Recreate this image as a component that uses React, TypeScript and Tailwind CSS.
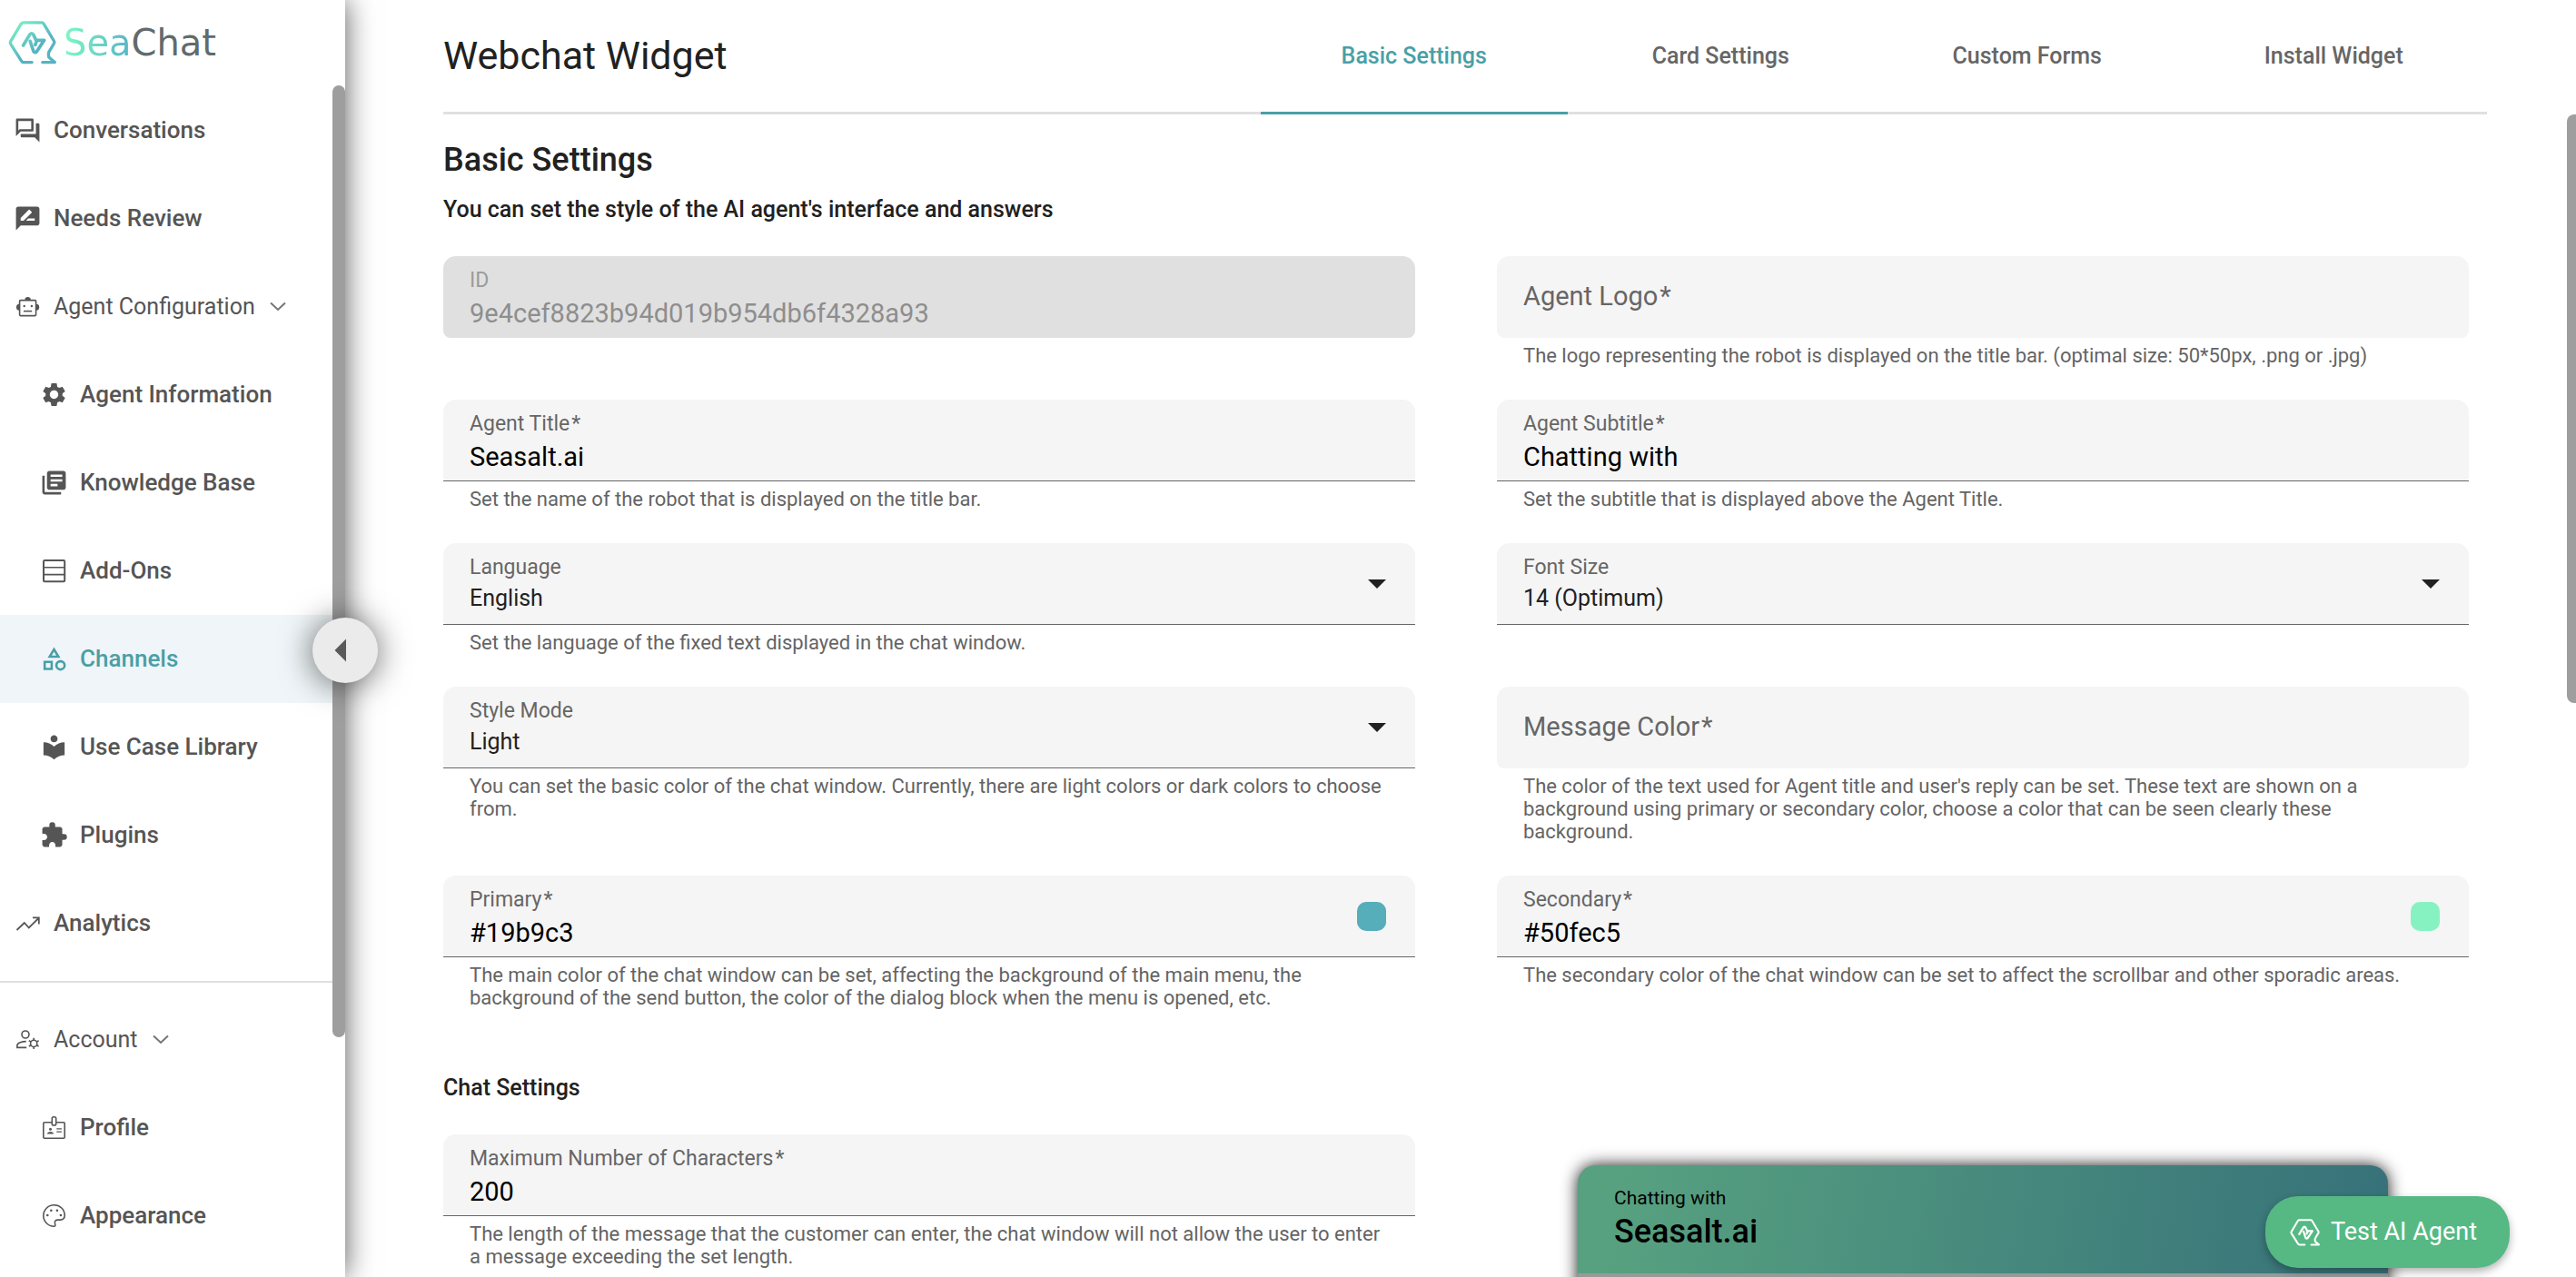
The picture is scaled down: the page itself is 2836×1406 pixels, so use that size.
import { useId } from "react";
import type { ComponentType, ReactNode } from "react";
import {
  MdArrowLeft,
  MdExtension,
  MdLibraryBooks,
  MdLocalLibrary,
  MdOutlineCategory,
  MdOutlineQuestionAnswer,
  MdRateReview,
  MdSettings,
} from "react-icons/md";

type IconProps = { className?: string };

function LineIcon({ className, children }: IconProps & { children: ReactNode }) {
  return (
    <svg viewBox="-3 -3 31 31" className={className} fill="none" stroke="currentColor" strokeWidth="1.6" aria-hidden="true">
      {children}
    </svg>
  );
}

function RobotIcon({ className }: IconProps) {
  return (
    <LineIcon className={className}>
      <rect x="3.6" y="5.6" width="18" height="17" rx="1" />
      <path d="M9.4 5.2a3.2 3.2 0 0 1 6.4 0zM3.2 9.8v7A3.3 3.3 0 0 1 0 13.3a3.3 3.3 0 0 1 3.2-3.5zM22 9.8v7a3.3 3.3 0 0 0 3.2-3.5A3.3 3.3 0 0 0 22 9.8z" fill="currentColor" stroke="none" />
      <circle cx="8.7" cy="12" r="1.2" fill="currentColor" stroke="none" />
      <circle cx="16.9" cy="12" r="1.2" fill="currentColor" stroke="none" />
      <path d="M8 17.6h9.2" />
    </LineIcon>
  );
}

function RowsIcon({ className }: IconProps) {
  return (
    <LineIcon className={className}>
      <rect x="1" y="1" width="23.2" height="23.2" rx="1.2" strokeWidth="2" />
      <path d="M1 8.8h23M1 16.6h23" />
    </LineIcon>
  );
}

function TrendIcon({ className }: IconProps) {
  return (
    <LineIcon className={className}>
      <path d="M.5 20 8.8 12l5 5.5L24.4 7" strokeWidth="1.8" />
      <path d="M18 6.4h6.8v7" strokeWidth="1.8" />
    </LineIcon>
  );
}

function AccountIcon({ className }: IconProps) {
  return (
    <LineIcon className={className}>
      <circle cx="10" cy="7" r="4" />
      <path d="M10.8 14.6C6.5 14.6.9 16.2.9 19v2.4h10.3" />
      <circle cx="19.2" cy="16.9" r="3.6" />
      <path d="M19.2 13.3v-2.6M19.2 20.5v2.6M16.1 15.1l-2.3-1.3M22.3 18.7l2.3 1.3M16.1 18.7l-2.3 1.3M22.3 15.1l2.3-1.3" />
    </LineIcon>
  );
}

function BadgeIcon({ className }: IconProps) {
  return (
    <LineIcon className={className}>
      <rect x=".8" y="6.8" width="23.4" height="17.4" rx="1.2" />
      <rect x="10.3" y=".8" width="4.4" height="9.2" rx="1.8" fill="white" />
      <circle cx="8.5" cy="14.3" r="1.5" fill="currentColor" stroke="none" />
      <path d="M4.9 19.6c0-3.4 7.2-3.4 7.2 0z" fill="currentColor" stroke="none" />
      <path d="M15.3 13.8h5.6M15.3 17.2h5.6" strokeWidth="1.3" />
    </LineIcon>
  );
}

function PaletteIcon({ className }: IconProps) {
  return (
    <LineIcon className={className}>
      <path d="M12.5.8a11.7 11.7 0 0 0 0 23.4c1 0 1.5-.6 1.3-1.6l-.4-2.2c-.3-2 1-3.3 3-3.3h2.800c3 0 5-2 5-5C24.200 5.500 19 .8 12.500 .8z" />
      <circle cx="5.300" cy="12" r="1.300" fill="currentColor" stroke="none" />
      <circle cx="9.300" cy="6.700" r="1.300" fill="currentColor" stroke="none" />
      <circle cx="15.900" cy="6.700" r="1.300" fill="currentColor" stroke="none" />
      <circle cx="19.900" cy="12" r="1.300" fill="currentColor" stroke="none" />
    </LineIcon>
  );
}

function Chevron() {
  return (
    <svg viewBox="0 0 18 11" className="ml-4 h-[11px] w-[18px] text-[#757575]" fill="none" stroke="currentColor" strokeWidth="2" aria-hidden="true">
      <path d="m1 1.500 8 7.500 8-7.500" />
    </svg>
  );
}

function SeaMark({ className, mono }: IconProps & { mono?: boolean }) {
  const id = useId();
  const paint = mono ? "currentColor" : `url(#${id})`;
  return (
    <svg viewBox="26 65 160 144" className={className} fill="none" aria-hidden="true">
      <defs>
        <linearGradient id={id} x1="40" y1="66" x2="140" y2="200" gradientUnits="userSpaceOnUse">
          <stop offset="0" stopColor="#7ff7c6" />
          <stop offset="0.7" stopColor="#56b4c2" />
        </linearGradient>
      </defs>
      <g stroke={paint} strokeLinejoin="round" strokeLinecap="round">
        <path d="M105 202H77q-5 0-7-4L34 141q-2-4 0-8l35-59q3-4 8-4h60q5 0 7 4l34 57q3 5 0 9l-15 25q-4 6-3 12l1 8 20 17h-41" strokeWidth="10" />
        <path d="M76 146 97 111q6-10 13 0l9 18h27" strokeWidth="11" />
        <path d="m99 132 11 33q5 9 12 0l22-34M121 130l-5 14" strokeWidth="11" />
      </g>
    </svg>
  );
}

function NavItem({ icon: Icon, text, sub, active }: { icon: ComponentType<IconProps>; text: string; sub?: boolean; active?: boolean }) {
  return (
    <a
      href="#"
      aria-current={active ? "page" : undefined}
      className={`flex h-[97px] items-center gap-[13px] text-[26px] font-medium ${sub ? "pl-[44px]" : "pl-[15px]"} ${active ? "bg-[#eff5f8] text-[#4a9fa6]" : "text-[#555555]"}`}
    >
      <Icon className="size-[31px] shrink-0" />
      {text}
    </a>
  );
}

function NavGroup({ icon: Icon, text }: { icon: ComponentType<IconProps>; text: string }) {
  return (
    <button type="button" aria-expanded="true" className="flex h-[97px] w-full items-center pl-[15px] text-[25px] text-[#555555]">
      <Icon className="mr-[13px] size-[31px] shrink-0" />
      {text}
      <Chevron />
    </button>
  );
}

function Sidebar() {
  return (
    <aside className="relative z-10 flex w-[380px] shrink-0 flex-col bg-white shadow-[0_0_30px_rgba(0,0,0,0.65)]">
      <a href="#" aria-label="SeaChat" className="flex h-[94px] shrink-0 items-center gap-2 pl-[9px]">
        <SeaMark className="h-[48px] w-[53px]" />
        <span className="font-['DejaVu_Sans'] text-[40px] leading-none text-[#606b6c]">
          <span className="bg-linear-to-r from-[#7ff9c5] to-[#56b4c4] bg-clip-text text-transparent">Sea</span>Chat
        </span>
      </a>
      <div className="flex min-h-0 flex-1">
        <nav className="min-w-0 flex-1 overflow-hidden pt-px">
          <NavItem icon={MdOutlineQuestionAnswer} text="Conversations" />
          <NavItem icon={MdRateReview} text="Needs Review" />
          <NavGroup icon={RobotIcon} text="Agent Configuration" />
          <NavItem sub icon={MdSettings} text="Agent Information" />
          <NavItem sub icon={MdLibraryBooks} text="Knowledge Base" />
          <NavItem sub icon={RowsIcon} text="Add-Ons" />
          <NavItem sub active icon={MdOutlineCategory} text="Channels" />
          <NavItem sub icon={MdLocalLibrary} text="Use Case Library" />
          <NavItem sub icon={MdExtension} text="Plugins" />
          <NavItem icon={TrendIcon} text="Analytics" />
          <hr className="mt-[15px] mb-[14px] border-t-2 border-[#e0e0e0]" />
          <NavGroup icon={AccountIcon} text="Account" />
          <NavItem sub icon={BadgeIcon} text="Profile" />
          <NavItem sub icon={PaletteIcon} text="Appearance" />
        </nav>
        <div className="w-[14px] shrink-0">
          <div className="h-[1048px] rounded-full bg-[#9e9e9e]" />
        </div>
      </div>
      <button
        type="button"
        aria-label="Collapse sidebar"
        className="absolute top-[680px] -right-9 flex size-[72px] items-center justify-center rounded-full bg-[#ebebeb] pr-2 text-[#5a5a5a] shadow-[0_2px_36px_rgba(0,0,0,0.6)]"
      >
        <MdArrowLeft className="size-[60px] shrink-0" />
      </button>
    </aside>
  );
}

const tabs = ["Basic Settings", "Card Settings", "Custom Forms", "Install Widget"];

function Star() {
  return <span className="ml-[2px]">*</span>;
}

type FieldProps = {
  label: string;
  value?: string;
  help?: string;
  required?: boolean;
  disabled?: boolean;
  select?: boolean;
  swatch?: string;
};

function Field({ label, value, help, required, disabled, select, swatch }: FieldProps) {
  const id = useId();
  const empty = value === undefined;
  const name = (
    <label
      htmlFor={id}
      className={`block whitespace-nowrap ${empty ? "text-[29px] text-[#666666]" : disabled ? "text-[23px] leading-7 text-[#9b9b9b]" : "text-[23px] leading-7 text-[#666666]"}`}
    >
      {label}
      {required && <Star />}
    </label>
  );
  return (
    <div className="pb-9">
      <div className={empty || disabled ? "" : "border-b border-[#666666]"}>
        <div
          className={`relative rounded-t-[14px] px-[29px] ${disabled ? "bg-[#e0e0e0]" : "bg-[#f5f5f5]"} ${empty || disabled ? "h-[90px] rounded-b-lg" : "h-[89px] rounded-b-sm"} ${empty ? "flex items-center" : "pt-[13px]"}`}
        >
          {name}
          {empty && <input id={id} className="min-w-0 flex-1 bg-transparent text-[29px] outline-none" />}
          {!empty && !select && (
            <input
              id={id}
              defaultValue={value}
              disabled={disabled}
              className={`mt-[6px] block h-[34px] w-full bg-transparent text-[29px] outline-none ${disabled ? "text-[#8e8e8e]" : "text-black"}`}
            />
          )}
          {select && (
            <>
              <select id={id} className="mt-px block h-[34px] w-full appearance-none bg-transparent text-[25px] text-[#212121] outline-none">
                <option>{value}</option>
              </select>
              <svg viewBox="0 0 20 10" className="pointer-events-none absolute top-10 right-8 h-[10px] w-5" fill="#212121" aria-hidden="true">
                <path d="M0 0h20L10 10z" />
              </svg>
            </>
          )}
          {swatch && (
            <button type="button" aria-label={`Pick ${label} color`} className={`absolute top-[29px] right-8 size-8 rounded-[10px] ${swatch}`} />
          )}
        </div>
      </div>
      <p className="mt-[7px] min-h-[25px] pr-8 pl-[29px] text-[22px] leading-[25px] text-[#646464]">{help}</p>
    </div>
  );
}

function ChatPreview() {
  return (
    <div className="mx-[89px] mt-[136px] h-[400px] overflow-hidden rounded-t-[20px] bg-[#999999] shadow-[0_0_18px_rgba(0,0,0,0.9)]">
      <div className="flex h-[119px] flex-col justify-center bg-linear-[100deg] from-[#57a180] from-5% to-[#37727a] to-98% px-10 pb-1 text-black">
        <div className="text-[21px] leading-7">Chatting with</div>
        <div className="pt-[2px] text-[36px] leading-[42px] font-medium">Seasalt.ai</div>
      </div>
    </div>
  );
}

export default function App() {
  return (
    <div className="relative flex h-screen overflow-hidden bg-white font-['Roboto',sans-serif] text-[#212121]">
      <Sidebar />
      <main className="flex min-w-0 flex-1 flex-col">
        <header className="mr-[98px] ml-[108px] flex h-[126px] shrink-0">
          <h1 className="flex w-2/5 items-center border-b-[3px] border-[#e0e0e0] text-[43px]">Webchat Widget</h1>
          <div role="tablist" className="grid w-3/5 grid-cols-4">
            {tabs.map((tab, i) => (
              <button
                key={tab}
                type="button"
                role="tab"
                aria-selected={i === 0}
                className={`border-b-[3px] text-[25px] font-medium ${i === 0 ? "border-[#4a9fa6] text-[#4a9fa6]" : "border-[#e0e0e0] text-[#666666]"}`}
              >
                {tab}
              </button>
            ))}
          </div>
        </header>
        <div className="flex min-h-0 flex-1">
          <form className="min-w-0 flex-1 overflow-hidden pr-[108px] pl-[108px]">
            <h2 className="mt-[28px] text-[36px] leading-[44px] font-medium">Basic Settings</h2>
            <p className="mt-[17px] text-[25px] leading-8 font-medium">You can set the style of the AI agent&apos;s interface and answers</p>
            <div className="mt-[35px] grid grid-cols-2 gap-x-[90px]">
              <Field label="ID" value="9e4cef8823b94d019b954db6f4328a93" disabled />
              <Field label="Agent Logo" required help="The logo representing the robot is displayed on the title bar. (optimal size: 50*50px, .png or .jpg)" />
              <Field label="Agent Title" required value="Seasalt.ai" help="Set the name of the robot that is displayed on the title bar." />
              <Field label="Agent Subtitle" required value="Chatting with" help="Set the subtitle that is displayed above the Agent Title." />
              <Field label="Language" select value="English" help="Set the language of the fixed text displayed in the chat window." />
              <Field label="Font Size" select value="14 (Optimum)" />
              <Field label="Style Mode" select value="Light" help="You can set the basic color of the chat window. Currently, there are light colors or dark colors to choose from." />
              <Field label="Message Color" required help="The color of the text used for Agent title and user's reply can be set. These text are shown on a background using primary or secondary color, choose a color that can be seen clearly these background." />
              <Field label="Primary" required value="#19b9c3" swatch="bg-[#55aeb9]" help="The main color of the chat window can be set, affecting the background of the main menu, the background of the send button, the color of the dialog block when the menu is opened, etc." />
              <Field label="Secondary" required value="#50fec5" swatch="bg-[#86f2c2]" help="The secondary color of the chat window can be set to affect the scrollbar and other sporadic areas." />
            </div>
            <div className="grid grid-cols-2 gap-x-[90px]">
              <section>
                <h3 className="my-[35px] text-[25px] leading-8 font-medium">Chat Settings</h3>
                <Field label="Maximum Number of Characters" required value="200" help="The length of the message that the customer can enter, the chat window will not allow the user to enter a message exceeding the set length." />
              </section>
              <ChatPreview />
            </div>
          </form>
          <div className="w-[10px] shrink-0">
            <div className="h-[648px] rounded-l-[8px] bg-[#9e9e9e]" />
          </div>
        </div>
      </main>
      <button
        type="button"
        className="absolute right-[73px] bottom-[10px] z-20 flex h-[79px] items-center gap-3 rounded-[36px] bg-[#56b983] pr-9 pl-[27px] text-[27px] text-white shadow-[0_4px_10px_rgba(0,0,0,0.3)]"
      >
        <SeaMark mono className="h-[30px] w-[33px]" />
        Test AI Agent
      </button>
    </div>
  );
}
